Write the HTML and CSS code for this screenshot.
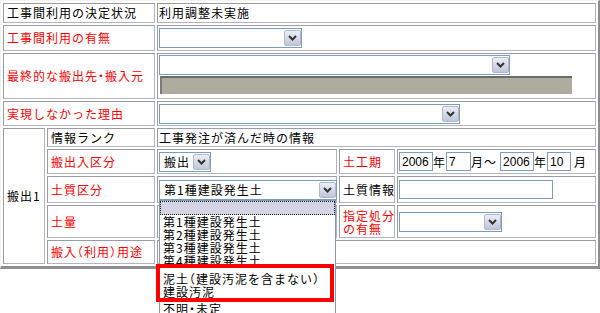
FILE: index.html
```html
<!DOCTYPE html>
<html lang="ja">
<head>
    <meta charset="UTF-8">
    <title>工事間利用の決定状況</title>
    <link rel="stylesheet" href="styles.css">
</head>
<body>
    <table class="info">
        <colgroup>
            <col class="col-a"><col class="col-b"><col class="col-c"><col class="col-d"><col class="col-e">
        </colgroup>
        <tr class="r1">
            <td colspan="2" class="label">工事間利用の決定状況</td>
            <td colspan="3" class="value">利用調整未実施</td>
        </tr>
        <tr class="r2">
            <td colspan="2" class="label req">工事間利用の有無</td>
            <td colspan="3" class="value">
                <span class="sel w-use"><span class="sel-text"></span><span class="sel-btn"><svg width="9" height="6" viewBox="0 0 9 6"><path d="M1 1L4.5 4.5L8 1" fill="none" stroke="#333" stroke-width="2"/></svg></span></span>
            </td>
        </tr>
        <tr class="r3">
            <td colspan="2" class="label req">最終的な搬出先・搬入元</td>
            <td colspan="3" class="value stack">
                <span class="sel block w-dest"><span class="sel-text"></span><span class="sel-btn"><svg width="9" height="6" viewBox="0 0 9 6"><path d="M1 1L4.5 4.5L8 1" fill="none" stroke="#333" stroke-width="2"/></svg></span></span>
                <span class="bar"></span>
            </td>
        </tr>
        <tr class="r4">
            <td colspan="2" class="label req">実現しなかった理由</td>
            <td colspan="3" class="value">
                <span class="sel w-reason"><span class="sel-text"></span><span class="sel-btn"><svg width="9" height="6" viewBox="0 0 9 6"><path d="M1 1L4.5 4.5L8 1" fill="none" stroke="#333" stroke-width="2"/></svg></span></span>
            </td>
        </tr>
        <tr class="r5">
            <td rowspan="5" class="label">搬出1</td>
            <td class="label">情報ランク</td>
            <td colspan="3" class="value">工事発注が済んだ時の情報</td>
        </tr>
        <tr class="r6">
            <td class="label req">搬出入区分</td>
            <td class="value">
                <span class="sel w-kind"><span class="sel-text">搬出</span><span class="sel-btn"><svg width="9" height="6" viewBox="0 0 9 6"><path d="M1 1L4.5 4.5L8 1" fill="none" stroke="#333" stroke-width="2"/></svg></span></span>
            </td>
            <td class="label req">土工期</td>
            <td class="value">
                <div class="dates">
                    <input type="text" class="inp w-year" value="2006"><span>年</span><input type="text" class="inp w-month" value="7"><span>月～</span><input type="text" class="inp w-year gap" value="2006"><span>年</span><input type="text" class="inp w-month2" value="10"><span class="gap">月</span>
                </div>
            </td>
        </tr>
        <tr class="r7">
            <td class="label req">土質区分</td>
            <td class="value">
                <span class="sel w-soil"><span class="sel-text">第1種建設発生土</span><span class="sel-btn"><svg width="9" height="6" viewBox="0 0 9 6"><path d="M1 1L4.5 4.5L8 1" fill="none" stroke="#333" stroke-width="2"/></svg></span>
                    <div class="list">
                        <div class="opt hl"></div>
                        <div class="opt">第1種建設発生土</div>
                        <div class="opt">第2種建設発生土</div>
                        <div class="opt">第3種建設発生土</div>
                        <div class="opt">第4種建設発生土</div>
                        <div class="opt push5">泥土（建設汚泥を含まない）</div>
                        <div class="opt">建設汚泥</div>
                        <div class="opt push4">不明・未定</div>
                        <div class="mark"></div>
                    </div>
                </span>
            </td>
            <td class="label">土質情報</td>
            <td class="value"><input type="text" class="inp w-soilinfo" value=""></td>
        </tr>
        <tr class="r8">
            <td class="label req">土量</td>
            <td class="value"></td>
            <td class="label req two">指定処分<br>の有無</td>
            <td class="value">
                <span class="sel w-disp"><span class="sel-text"></span><span class="sel-btn"><svg width="9" height="6" viewBox="0 0 9 6"><path d="M1 1L4.5 4.5L8 1" fill="none" stroke="#333" stroke-width="2"/></svg></span></span>
            </td>
        </tr>
        <tr class="r9">
            <td class="label req">搬入（利用）用途</td>
            <td colspan="3" class="value"></td>
        </tr>
    </table>
</body>
</html>
```

FILE: styles.css
```css
html { background: #fff; height: 100%; }
body { margin: 0; padding: 0; min-height: 100%; font-family: "Noto Sans CJK JP", sans-serif; font-size: 12px; letter-spacing: 1px; color: #000; font-feature-settings: "halt"; }

.info {
    border-collapse: separate;
    border-spacing: 2px;
    table-layout: fixed;
    width: 600px;
    border-style: solid;
    border-width: 1px 2px 3px 1px;
    border-color: #f4f4ec #8e8e8e #8e8e8e #f4f4ec;
}
.col-a { width: 42px; }
.col-b { width: 108px; }
.col-c { width: 180px; }
.col-d { width: 56px; }
.col-e { width: 199px; }

.info td {
    box-sizing: border-box;
    border: 1px solid;
    border-color: #9a9aa8 #b4b4bc #b4b4bc #9a9aa8;
    padding: 0 1px;
    line-height: 14px;
    vertical-align: middle;
    white-space: nowrap;
}
.info td.label { padding-left: 3px; }
.info td.value { padding-left: 1px; }
.info td.req { color: #f00; }
.info td.two { line-height: 13px; }
.info td.stack { vertical-align: top; padding-top: 1px; }

.r1 { height: 20px; }
.r2 { height: 26px; }
.r3 { height: 46px; }
.r4 { height: 25px; }
.r5 { height: 19px; }
.r6 { height: 25px; }
.r7 { height: 27px; }
.r8 { height: 33px; }
.r9 { height: 24px; }

/* select look-alike */
.sel {
    display: inline-flex;
    align-items: center;
    position: relative;
    box-sizing: border-box;
    height: 20px;
    border: 1px solid #7f9db9;
    background: #fff;
    vertical-align: middle;
}
.sel.block { display: flex; margin-bottom: 1px; }
.sel-text { flex: 1; padding-left: 4px; line-height: 18px; overflow: hidden; }
.sel-btn {
    box-sizing: border-box;
    width: 17px;
    height: 16px;
    border: 1px solid #b0b8d0;
    border-radius: 2px;
    background: linear-gradient(#eceef6, #c0c6da);
    display: flex;
    align-items: center;
    justify-content: center;
}
.w-use { width: 143px; }
.w-dest { width: 351px; }
.w-reason { width: 301px; }
.w-kind { width: 52px; }
.w-soil { width: 178px; }
.w-disp { width: 103px; }

.bar {
    display: block;
    box-sizing: border-box;
    width: 412px;
    height: 18px;
    margin-left: 1px;
    background: #acac9f;
    border-top: 2px solid #6a6a6a;
    border-left: 2px solid #7a7a7a;
}

/* text inputs */
.inp {
    box-sizing: border-box;
    height: 19px;
    margin: 0;
    padding: 0 2px;
    border: 1px solid #7f9db9;
    background: #fff;
    font-family: "Liberation Sans", Arial, sans-serif;
    font-size: 12px;
    letter-spacing: 0;
    color: #000;
    vertical-align: middle;
}
.w-year { width: 34px; }
.w-month { width: 25px; }
.w-month2 { width: 24px; }
.w-soilinfo { width: 154px; }
.dates { display: flex; align-items: center; }
.dates .gap { margin-left: 3px; }

/* open dropdown list */
.list {
    position: absolute;
    left: -1px;
    top: 19px;
    z-index: 5;
    box-sizing: border-box;
    width: 177px;
    height: 115px;
    border: 1px solid #7f9db9;
    border-bottom: 0;
    background: #fff;
    text-align: left;
}
.opt { height: 13px; line-height: 13px; padding-left: 3px; white-space: nowrap; }
.opt.hl { box-sizing: border-box; height: 14px; border: 1px dotted #222; background: #d4d4e4; }
.opt.push5 { margin-top: 5px; }
.opt.push4 { margin-top: 4px; }
.mark {
    position: absolute;
    left: -4px;
    top: 63px;
    box-sizing: border-box;
    width: 178px;
    height: 38px;
    border: 4px solid #f00;
}
```
